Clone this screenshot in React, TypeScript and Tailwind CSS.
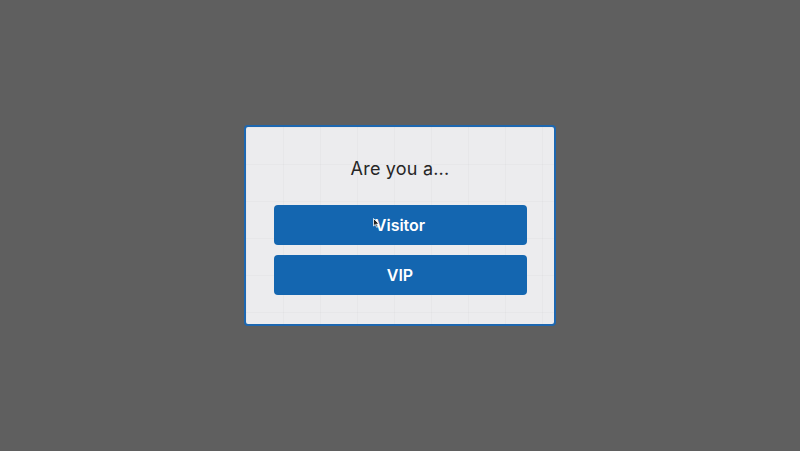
import React from "react";

export default function App() {
  return (
    <div
      className="w-[800px] h-[451px] bg-[#5f5f5f] flex items-center justify-center"
      style={{ fontFamily: "Inter, 'Noto Sans', sans-serif" }}
    >
      <div className="mt-[-1px] w-[312px] h-[201px] rounded-[4px] border-2 border-[#1d67b0] bg-[#ececee] bg-[linear-gradient(to_right,rgba(0,0,0,0.02)_1px,transparent_1px),linear-gradient(to_bottom,rgba(0,0,0,0.02)_1px,transparent_1px)] bg-[size:37px_37px] flex flex-col items-center pt-[29px]">
        <div className="text-[18px] leading-[26px] text-[#262626] tracking-[0.2px]">Are you a...</div>
        <div className="mt-[23px] w-[253px] flex flex-col gap-[10px]">
          <button className="relative h-[40px] rounded-[4px] bg-[#1466b0] text-white text-[16px] font-semibold">
            Visitor
            <svg className="absolute left-[99px] top-[13px]" width="7" height="10" viewBox="0 0 7 10">
              <path d="M0.5 0.5 L0.5 8 L2.3 6.4 L3.6 9.3 L4.8 8.8 L3.6 6 L6 6 Z" fill="#222" stroke="#fff" strokeWidth="0.8" />
            </svg>
          </button>
          <button className="h-[40px] rounded-[4px] bg-[#1466b0] text-white text-[16px] font-semibold">
            VIP
          </button>
        </div>
      </div>
    </div>
  );
}
